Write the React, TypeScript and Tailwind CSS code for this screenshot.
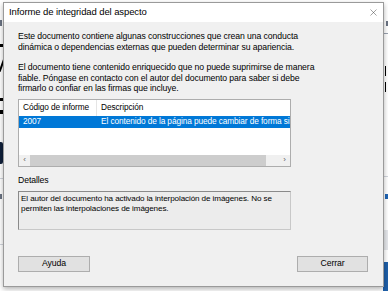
import { X } from "lucide-react";

const font = { fontFamily: '"Liberation Sans", Arial, sans-serif' };

function Backdrop() {
    return <div className="absolute inset-0 bg-white overflow-hidden">
        <div className="absolute left-0 top-[20px] w-[2px] h-[6px] bg-gray-500"></div>
        <div className="absolute left-0 top-[44px] w-[3px] h-[3px] bg-black"></div>
        <div className="absolute left-[1px] top-[58px] w-[2px] h-[14px] bg-black rotate-[20deg]"></div>
        <div className="absolute left-0 top-[98px] w-[3px] h-[3px] bg-black"></div>
        <div className="absolute left-0 top-[110px] w-[3px] h-[4px] bg-black"></div>
        <div className="absolute left-0 top-[142px] w-[3px] h-[22px] bg-[#10203a] rounded-r-[2px]"></div>
        <div className="absolute left-0 top-[178px] w-[4px] h-px bg-gray-300"></div>
        <div className="absolute left-0 top-[194px] w-[2px] h-[5px] bg-gray-500"></div>
        <div className="absolute left-0 top-[244px] w-[4px] h-px bg-gray-300"></div>
        <div className="absolute right-0 top-[21px] w-[2px] h-[5px] bg-gray-500"></div>
        <div className="absolute right-0 top-[33px] w-[4px] h-px bg-gray-400"></div>
        <div className="absolute right-0 top-[66px] w-[3px] h-[10px] border-l border-black"></div>
        <div className="absolute right-0 top-[82px] w-[3px] h-[10px] border-l border-black"></div>
        <div className="absolute right-0 top-[176px] w-[4px] h-px bg-gray-300"></div>
        <div className="absolute right-0 top-[194px] w-[3px] h-[5px] bg-[#1e64b4]"></div>
        <div className="absolute right-0 top-[230px] w-[4px] h-[20px] bg-gray-200"></div>
        <div className="absolute right-0 top-[262px] w-[5px] h-[29px] bg-[#1e5fa8]"></div>
    </div>
}

export default function App() {
    return <div className="relative w-[388px] h-[291px] overflow-hidden" style={font}>
        <Backdrop />
        <div className="absolute left-[3px] top-[2px] w-[381px] h-[285px] flex flex-col bg-[#f0f0f0] border border-[#9a9a9a] shadow-[0_2px_5px_rgba(0,0,0,0.3)] text-[8.7px] text-black tracking-[-0.1px]">
            <div className="h-[19px] bg-white flex items-center justify-between pl-[5px] pr-[4px] shrink-0">
                <span className="text-[9.5px]">Informe de integridad del aspecto</span>
                <X size={11} strokeWidth={1} className="text-[#333]" />
            </div>
            <div className="flex flex-col pl-[14px] pt-[9px] leading-[10.5px]">
                <p className="whitespace-nowrap">Este documento contiene algunas construcciones que crean una conducta<br />dinámica o dependencias externas que pueden determinar su apariencia.</p>
                <p className="mt-[10px] whitespace-nowrap">El documento tiene contenido enriquecido que no puede suprimirse de manera<br />fiable. Póngase en contacto con el autor del documento para saber si debe<br />firmarlo o confiar en las firmas que incluye.</p>
                <div className="mt-[5px] w-[273px] h-[68px] border border-[#adadad] bg-white flex flex-col overflow-hidden text-[8.3px]">
                    <div className="flex h-[16px] shrink-0 items-center whitespace-nowrap">
                        <div className="w-[78px] h-full flex items-center pl-[4px] border-r border-[#e5e5e5]">Código de informe</div>
                        <div className="pl-[4px]">Descripción</div>
                    </div>
                    <div className="flex h-[12px] items-center bg-[#0078d7] text-white whitespace-nowrap overflow-hidden">
                        <div className="w-[78px] pl-[4px] shrink-0">2007</div>
                        <div className="pl-[4px]">El contenido de la página puede cambiar de forma silenciosa</div>
                    </div>
                    <div className="flex-1"></div>
                    <div className="h-[11px] bg-[#f0f0f0] flex items-center shrink-0">
                        <span className="w-[11px] text-center text-[8px] text-[#606060]">‹</span>
                        <div className="w-[236px] h-full bg-[#cdcdcd]"></div>
                        <div className="flex-1"></div>
                        <span className="w-[11px] text-center text-[8px] text-[#606060]">›</span>
                    </div>
                </div>
                <div className="mt-[8px]">Detalles</div>
                <div className="mt-[6px] w-[273px] h-[39px] bg-[#ececec] border border-[#c8c8c8] border-t-[#8a8a8a] border-l-[#8a8a8a] px-[2px] pt-[2px] leading-[9.5px] whitespace-nowrap text-[8.1px]">
                    El autor del documento ha activado la interpolación de imágenes. No se<br />permiten las interpolaciones de imágenes.
                </div>
            </div>
            <div className="flex justify-between pl-[14px] pr-[15px] mt-[26px]">
                <button className="w-[72px] h-[16px] bg-[#e1e1e1] border border-[#adadad] text-[8.7px]">Ayuda</button>
                <button className="w-[71px] h-[16px] bg-[#e1e1e1] border border-[#adadad] text-[8.7px]">Cerrar</button>
            </div>
        </div>
    </div>
}
